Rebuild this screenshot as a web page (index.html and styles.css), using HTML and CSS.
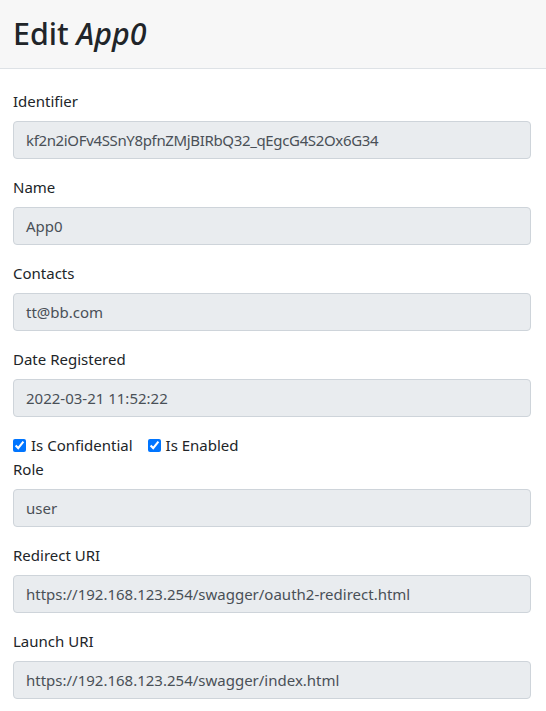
FILE: index.html
```html
<!DOCTYPE html>
<html>
<head>
<meta charset="utf-8">
<link rel="stylesheet" href="styles.css">
</head>
<body>
<div class="modal">
  <div class="modal-header">
    <h2 class="title">Edit <em>App0</em></h2>
  </div>
  <div class="modal-body">
    <div class="group">
      <label class="label">Identifier</label>
      <div class="input input-id">kf2n2iOFv4SSnY8pfnZMjBIRbQ32_qEgcG4S2Ox6G34</div>
    </div>
    <div class="group">
      <label class="label">Name</label>
      <div class="input">App0</div>
    </div>
    <div class="group">
      <label class="label">Contacts</label>
      <div class="input">tt@bb.com</div>
    </div>
    <div class="group">
      <label class="label">Date Registered</label>
      <div class="input">2022-03-21 11:52:22</div>
    </div>
    <div class="checks">
      <label class="check"><input type="checkbox" checked> Is Confidential</label>
      <label class="check"><input type="checkbox" checked> Is Enabled</label>
    </div>
    <div class="group">
      <label class="label">Role</label>
      <div class="input">user</div>
    </div>
    <div class="group">
      <label class="label">Redirect URI</label>
      <div class="input">https://192.168.123.254/swagger/oauth2-redirect.html</div>
    </div>
    <div class="group">
      <label class="label">Launch URI</label>
      <div class="input">https://192.168.123.254/swagger/index.html</div>
    </div>
  </div>
</div>
</body>
</html>
```
FILE: styles.css
```css
html, body {
  margin: 0;
  padding: 0;
  background: #fff;
}
body {
  font-family: "Noto Sans", "Open Sans", sans-serif;
  font-size: 15px;
  line-height: 24px;
  color: #212529;
}
.modal-header {
  background: #f7f7f7;
  border-bottom: 1px solid #dee2e6;
  height: 69px;
  box-sizing: border-box;
  padding: 0 13px;
  display: flex;
  align-items: center;
}
.title {
  margin: 0;
  font-size: 30.4px;
  font-weight: 500;
  line-height: 40px;
}
.title em {
  font-style: italic;
}
.modal-body {
  padding: 20px 15px 0 13px;
}
.group {
  margin-bottom: 16px;
}
.label {
  display: block;
  margin-bottom: 8px;
}
.input {
  height: 38px;
  box-sizing: border-box;
  border: 1px solid #ced4da;
  border-radius: 4px;
  background: #e9ecef;
  color: #495057;
  padding: 6px 12px;
  line-height: 24px;
  white-space: nowrap;
  overflow: hidden;
}
.input-id {
  letter-spacing: -0.35px;
}
.checks {
  display: flex;
  gap: 15px;
}
.check {
  display: flex;
  align-items: center;
}
.check input {
  margin: 0 5px 0 0;
  width: 13px;
  height: 13px;
  accent-color: #0075ff;
}
```
